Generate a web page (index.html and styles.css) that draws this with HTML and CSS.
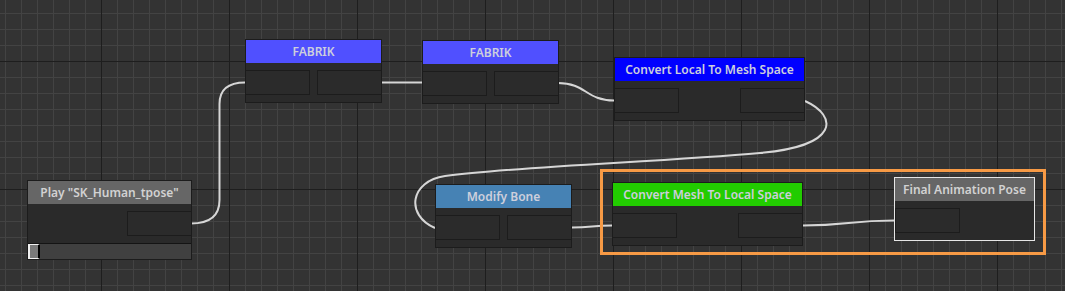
FILE: index.html
```html
<!DOCTYPE html>
<html>
<head>
<meta charset="utf-8">
<link rel="stylesheet" href="styles.css">
</head>
<body>
<div class="canvas">
  <svg class="wires" width="1065" height="291" viewBox="0 0 1065 291">
    <path d="M191,223.5 C210,223.5 219.5,215 219.5,200 V104 C219.5,90 227,82.5 245,82.5"/>
    <path d="M382,82.5 H422"/>
    <path d="M558,83 C586,83 586,100.5 614,100.5"/>
    <path d="M805,101 C838,116 840,146 760,153 C660,162 520,166 445,176 C410,181 405,215 435,228"/>
    <path d="M572,227.5 C592,227.5 592,225.5 612,225.5"/>
    <path d="M803,225.5 C848,225.5 849,220.5 894,220.5"/>
  </svg>

  <div class="selection"></div>

  <div class="node n-play">
    <div class="head h-gray">Play "SK_Human_tpose"</div>
    <div class="slots end"><div class="slot"></div></div>
    <div class="bar"><div class="handle"></div></div>
  </div>

  <div class="node n-fab1">
    <div class="head h-fabrik">FABRIK</div>
    <div class="slots"><div class="slot"></div><div class="slot"></div></div>
  </div>

  <div class="node n-fab2">
    <div class="head h-fabrik">FABRIK</div>
    <div class="slots"><div class="slot"></div><div class="slot"></div></div>
  </div>

  <div class="node n-local">
    <div class="head h-blue">Convert Local To Mesh Space</div>
    <div class="slots"><div class="slot"></div><div class="slot"></div></div>
  </div>

  <div class="node n-modify">
    <div class="head h-steel">Modify Bone</div>
    <div class="slots"><div class="slot"></div><div class="slot"></div></div>
  </div>

  <div class="node n-mesh">
    <div class="head h-green">Convert Mesh To Local Space</div>
    <div class="slots"><div class="slot"></div><div class="slot"></div></div>
  </div>

  <div class="node n-final selected">
    <div class="head h-gray">Final Animation Pose</div>
    <div class="slots"><div class="slot"></div></div>
  </div>
</div>
</body>
</html>
```

FILE: styles.css
```css
* { box-sizing: border-box; }
html, body {
  margin: 0;
  padding: 0;
  background: #333333;
  overflow: hidden;
}
.canvas {
  position: relative;
  width: 1065px;
  height: 291px;
  background-color: #333333;
  background-image:
    linear-gradient(to right, #1e1e1e 1px, transparent 1px),
    linear-gradient(to bottom, #1e1e1e 1px, transparent 1px),
    linear-gradient(to right, #434343 1px, transparent 1px),
    linear-gradient(to bottom, #434343 1px, transparent 1px);
  background-size: 128px 128px, 128px 128px, 16px 16px, 16px 16px;
  background-position: 101px 0, 0 61px, 5px 0, 0 13px;
  font-family: "Noto Sans", "DejaVu Sans", sans-serif;
}
.wires {
  position: absolute;
  left: 0;
  top: 0;
}
.wires path {
  fill: none;
  stroke: #d6d6d6;
  stroke-width: 2;
}
.selection {
  position: absolute;
  left: 600px;
  top: 169px;
  width: 446px;
  height: 86px;
  border: 3px solid #f79a45;
}
.node {
  position: absolute;
  height: 64px;
  background: #2a2a2a;
  border: 1px solid #1c1c1c;
  display: flex;
  flex-direction: column;
}
.node.selected {
  border-color: #e6e6e6;
}
.head {
  height: 23px;
  line-height: 23px;
  text-align: center;
  color: #cdcfdc;
  font-size: 12px;
  font-weight: 600;
  white-space: nowrap;
}
.h-gray { background: #666666; color: #d2d2d2; }
.h-fabrik { background: #5050ff; }
.h-blue { background: #0000ff; }
.h-steel { background: #4682b4; }
.h-green { background: #22cc00; }
.slots {
  display: flex;
  justify-content: space-between;
  margin: 7px -1px 0;
}
.slots.end { justify-content: flex-end; }
.selected .slots { margin: 7px 0 0; }
.slot {
  width: 65px;
  height: 25px;
  background: #2b2b2b;
  border: 1px solid #1c1c1c;
}
.bar {
  margin-top: 7px;
  height: 16px;
  border-top: 1px solid #141414;
  background: #404040;
}
.handle {
  width: 12px;
  height: 15px;
  background: #7a7a7a;
  border-left: 2px solid #f0f0f0;
  border-top: 1px solid #f0f0f0;
  border-bottom: 1px solid #f0f0f0;
  border-right: 2px solid #000000;
}
.n-play { left: 27px; top: 180px; width: 165px; height: 80px; }
.n-fab1 { left: 245px; top: 39px; width: 137px; }
.n-fab2 { left: 422px; top: 40px; width: 137px; }
.n-local { left: 614px; top: 57px; width: 191px; }
.n-modify { left: 435px; top: 184px; width: 137px; }
.n-mesh { left: 612px; top: 182px; width: 191px; }
.n-final { left: 894px; top: 177px; width: 141px; }
```
